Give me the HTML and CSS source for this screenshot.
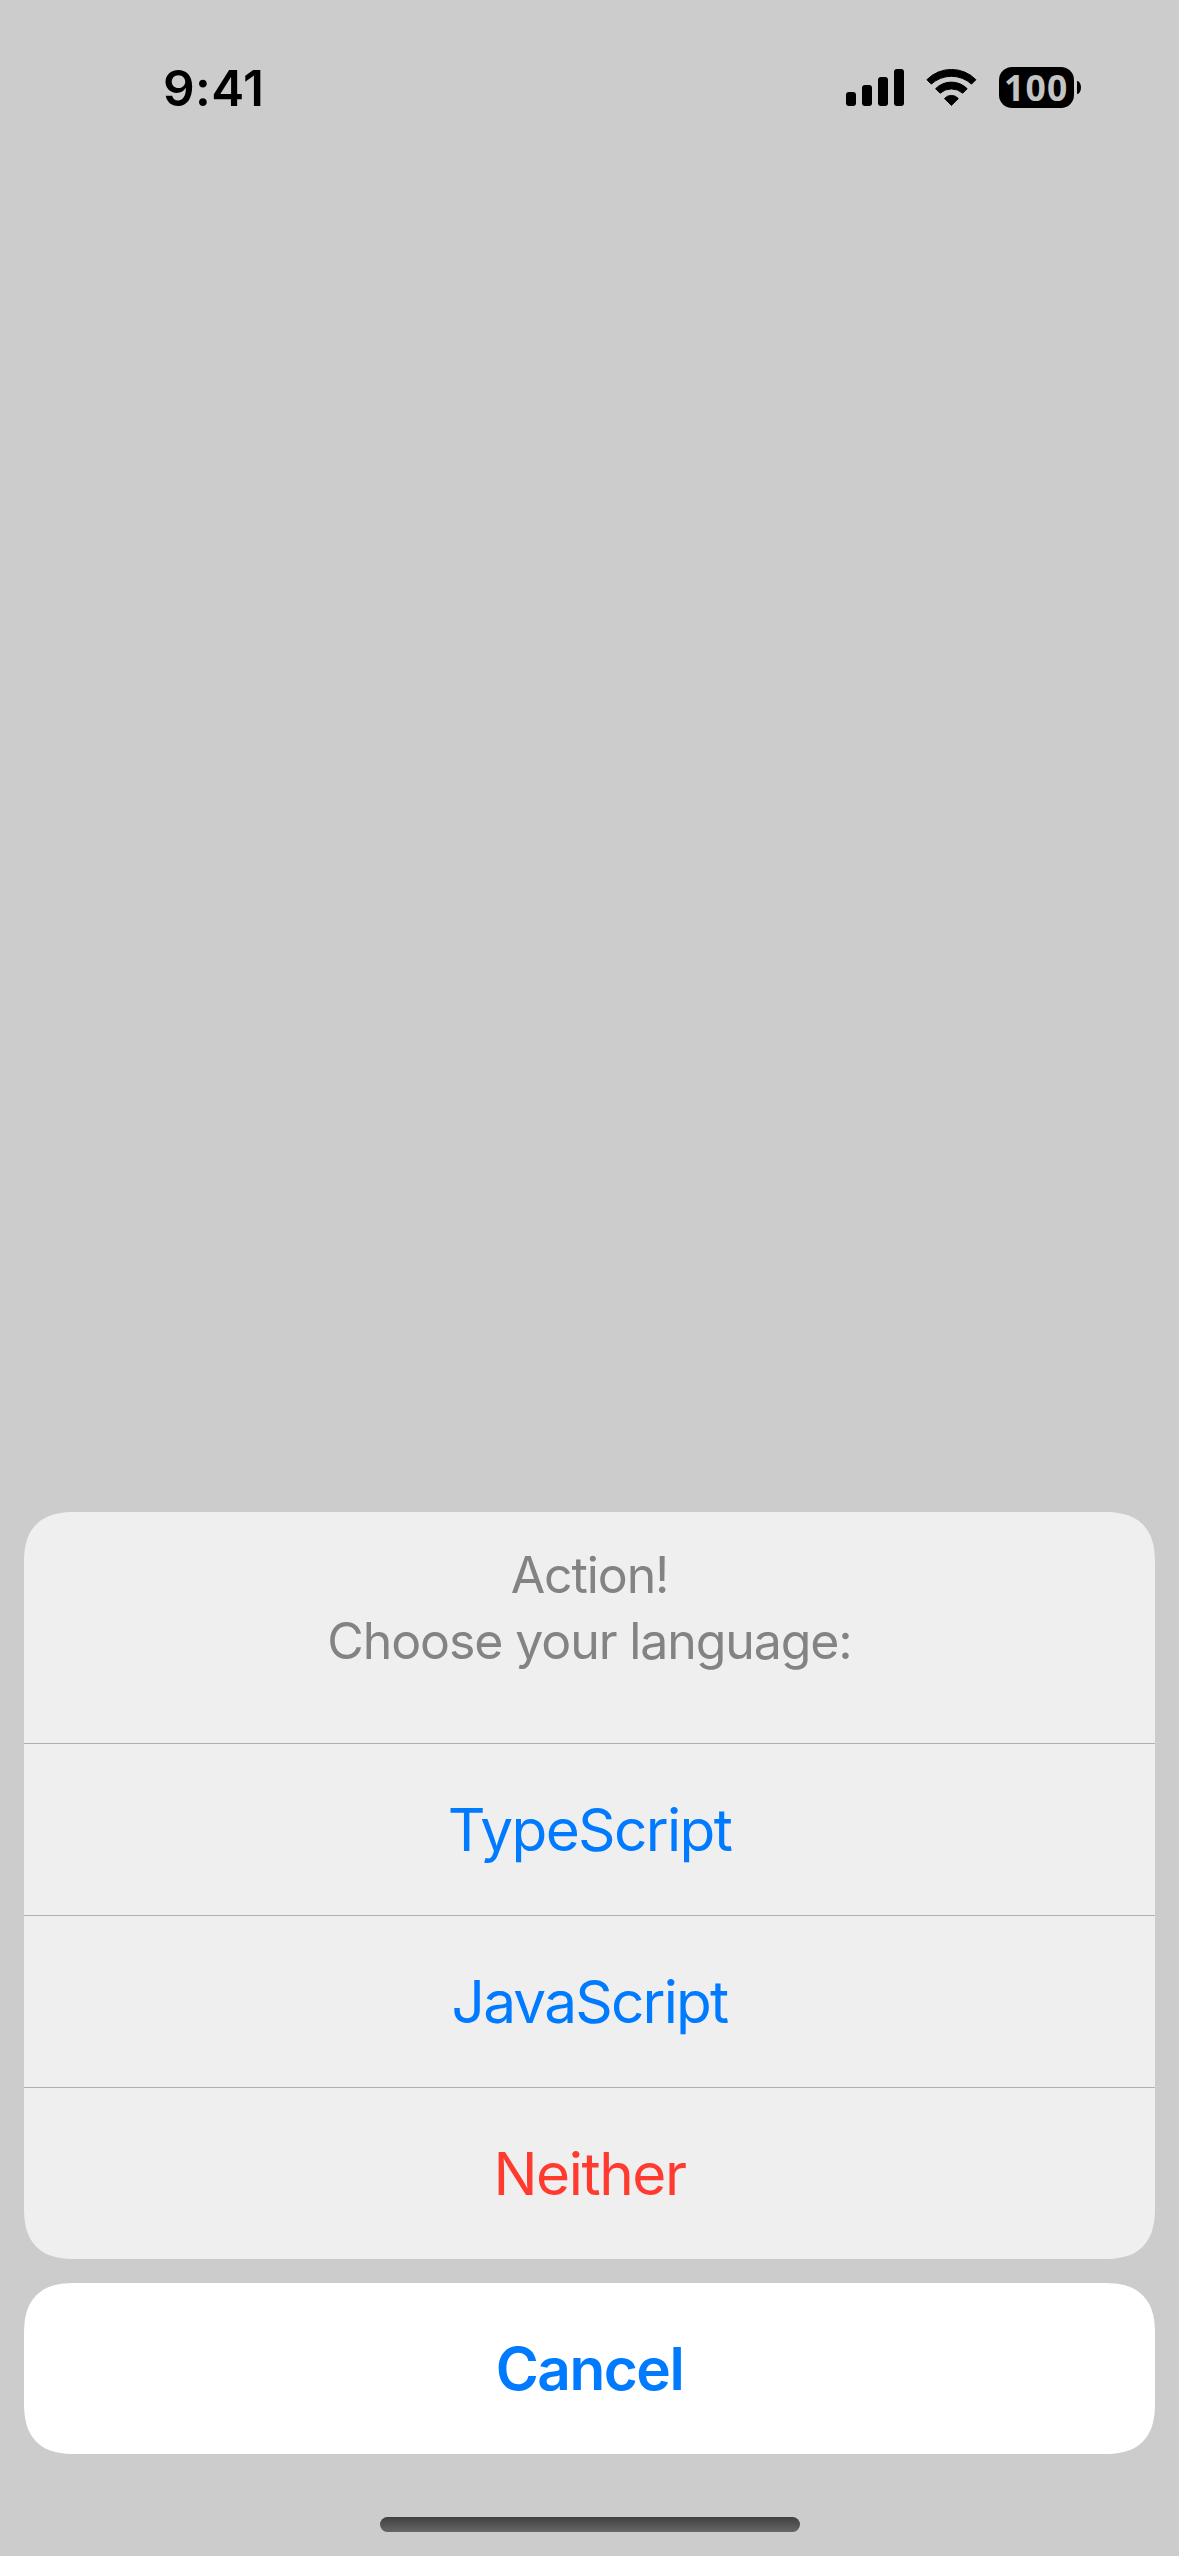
FILE: index.html
```html
<!DOCTYPE html>
<html lang="en">
<head>
<meta charset="utf-8">
<title>Action sheet</title>
<link rel="stylesheet" href="styles.css">
</head>
<body>
<main class="screen">
  <header class="status">
    <span class="time">9:41</span>
    <div class="indicators">
      <svg class="signal" width="58" height="37" viewBox="0 0 58 37"><rect x="0" y="23" width="10" height="14" rx="3"/><rect x="16" y="16" width="10" height="21" rx="3"/><rect x="32" y="8" width="10" height="29" rx="3"/><rect x="48" y="0" width="10" height="37" rx="3"/></svg>
      <svg class="wifi" width="52" height="37" viewBox="0 0 52 37"><path d="M.9 10.700A34.300 34.300 0 0 1 49.900 10.700L45.500 15.100A29.800 29.800 0 0 0 5.300 15.100Z"/><path d="M9.600 19.700A22.200 22.200 0 0 1 41.200 19.700L36.700 24.200A17 17 0 0 0 14.100 24.200Z"/><path d="M18.500 29.600A9 9 0 0 1 32.300 29.600L25.400 36.400Z"/></svg>
      <div class="battery"><span class="level">100</span><span class="cap"></span></div>
    </div>
  </header>
  <section class="sheet">
    <div class="message"><div>Action!</div><div>Choose your language:</div></div>
    <button class="option"><span>TypeScript</span></button>
    <button class="option"><span class="javascript">JavaScript</span></button>
    <button class="option destructive"><span>Neither</span></button>
  </section>
  <button class="cancel"><span>Cancel</span></button>
  <div class="home"></div>
</main>
</body>
</html>
```
FILE: styles.css
```css
* { box-sizing: border-box; }
body { margin: 0; background: #ccc; font-family: Inter, "Liberation Sans", sans-serif; }
button { border: 0; margin: 0; padding: 0; font: inherit; color: #007aff; display: flex; align-items: center; justify-content: center; }
.screen { width: 1179px; height: 2556px; display: flex; flex-direction: column; align-items: center; }
.status { width: 100%; height: 176px; padding: 61px 98px 0 163px; display: flex; justify-content: space-between; }
.time { font-size: 49.5px; line-height: 54px; font-weight: 600; letter-spacing: .4px; }
.indicators { display: flex; padding-top: 6px; }
.signal { margin-top: 2px; margin-right: 22px; }
.wifi { margin-top: 2px; margin-right: 21px; stroke: #000; stroke-width: 1; stroke-linejoin: round; }
.battery { display: flex; align-items: center; height: 41px; gap: 3px; }
.level { width: 75px; height: 41px; padding-left: 5px; border-radius: 13px; background: #000; color: #c4c4c4; font-family: "Open Sans", "Noto Sans", sans-serif; font-size: 35.5px; line-height: 41px; font-weight: 700; letter-spacing: 1.2px; }
.cap { width: 4px; height: 13px; background: #000; border-radius: 0 4px 4px 0 / 0 7px 7px 0; }
.sheet { width: 1131px; height: 747px; margin-top: 1336px; border-radius: 42px; overflow: hidden; background: #efefef; }
.message { height: 231px; padding-top: 30px; color: #838383; font-size: 50px; line-height: 66px; letter-spacing: -1.1px; text-align: center; }
.option { width: 100%; height: 172px; border-top: 1px solid #b0b0b0; background: transparent; font-size: 58.5px; letter-spacing: -1.65px; }
.javascript { letter-spacing: -1.8px; }
.destructive { color: #ff3b30; letter-spacing: -1.45px; }
.cancel { width: 1131px; height: 171px; margin-top: 24px; border-radius: 42px; background: #fff; font-size: 58.5px; font-weight: 600; letter-spacing: -1.5px; }
.home { width: 420px; height: 15px; margin-top: 63px; border-radius: 8px; background: linear-gradient(#404040, #666); }
@supports (corner-shape: superellipse(1.36)) {
  .sheet, .cancel { border-radius: 52px; corner-shape: superellipse(1.36); }
}
```
